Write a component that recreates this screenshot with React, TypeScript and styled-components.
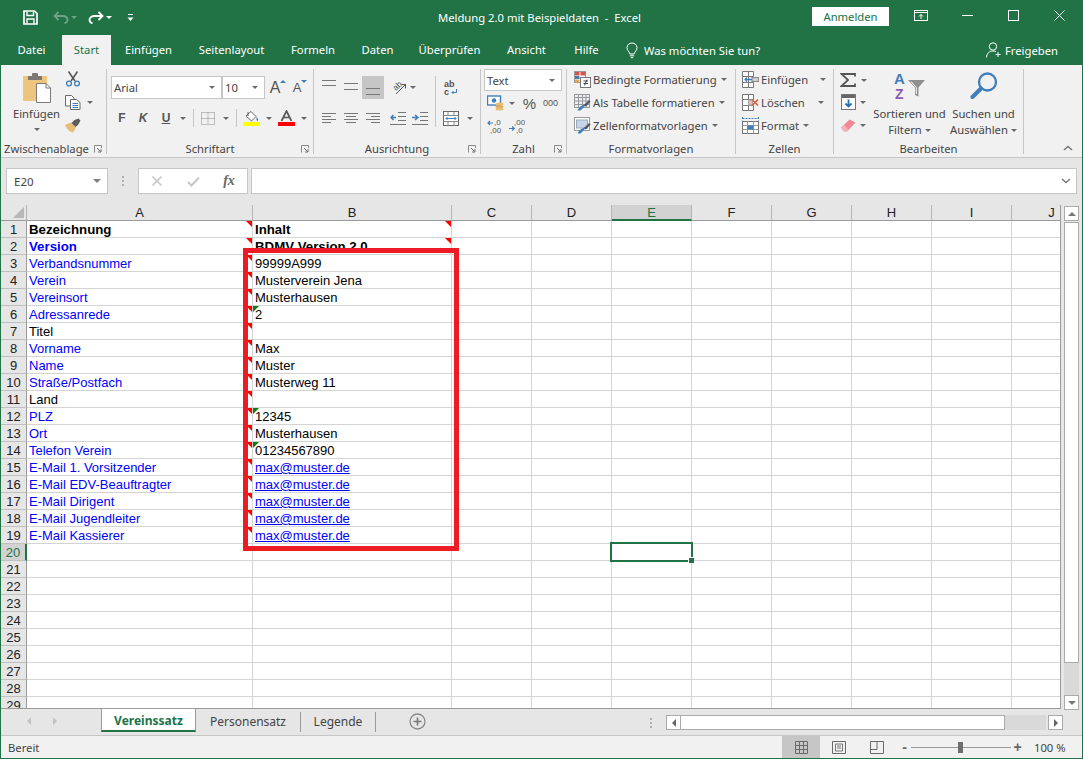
import React from 'react';
import styled, { createGlobalStyle } from 'styled-components';

const UI = `'Noto Sans', 'Open Sans', sans-serif`;
const CELL = `'Liberation Sans', Arial, sans-serif`;
const GREEN = '#217346';

const Global = createGlobalStyle`
  html, body { margin: 0; padding: 0; background: #fff; overflow: hidden; }
  * { box-sizing: border-box; }
`;

const Window = styled.div`
  width: 1083px;
  height: 759px;
  display: flex;
  flex-direction: column;
  border: 1px solid ${GREEN};
  border-top: none;
  font-family: ${UI};
  font-size: 11.25px;
  color: #444;
  overflow: hidden;
`;

/* title bar */
const TitleBar = styled.div`
  height: 35px;
  flex: none;
  display: flex;
  align-items: center;
  background: ${GREEN};
  color: #fff;
`;
const Qat = styled.div`
  width: 437px;
  display: flex;
  align-items: center;
  padding-left: 22px;
`;
const QatSlot = styled.span<{ $w: number }>`
  width: ${(p) => p.$w}px;
  display: flex;
  justify-content: center;
  align-items: center;
`;
const WhiteCaret = styled.span<{ $dim?: boolean }>`
  width: 0;
  height: 0;
  border-left: 3px solid transparent;
  border-right: 3px solid transparent;
  border-top: 3px solid ${(p) => (p.$dim ? '#6fa288' : '#fff')};
`;
const DocTitle = styled.div`
  white-space: pre;
`;
const SignIn = styled.div`
  margin-left: auto;
  margin-right: 9px;
  width: 77px;
  height: 19px;
  margin-top: -3px;
  background: #fff;
  color: ${GREEN};
  text-align: center;
  line-height: 19px;
`;
const WinButton = styled.div`
  width: 46px;
  height: 35px;
  display: flex;
  justify-content: center;
  align-items: center;
  padding-bottom: 4px;
`;

/* tabs */
const TabRow = styled.div`
  height: 30px;
  flex: none;
  display: flex;
  background: ${GREEN};
  color: #fff;
`;
const RibbonTab = styled.div<{ $w: number; $active?: boolean }>`
  width: ${(p) => p.$w}px;
  text-align: center;
  line-height: 30px;
  background: ${(p) => (p.$active ? '#f1f1f1' : 'transparent')};
  color: ${(p) => (p.$active ? GREEN : '#fff')};
`;
const TellMe = styled.div`
  margin-left: 13px;
  display: flex;
  align-items: center;
  gap: 6px;
`;
const Share = styled.div`
  margin-left: auto;
  padding-right: 24px;
  display: flex;
  align-items: center;
  gap: 3px;
`;

/* ribbon */
const Ribbon = styled.div`
  height: 93px;
  flex: none;
  display: flex;
  padding-top: 4px;
  background: #f1f1f1;
  border-bottom: 1px solid #c6c6c6;
`;
const Group = styled.div<{ $w: number }>`
  position: relative;
  width: ${(p) => p.$w}px;
  height: 85px;
  flex: none;
  display: flex;
  flex-direction: column;
  border-right: 1px solid #c6c6c6;
`;
const GroupBody = styled.div<{ $pl?: number; $pt?: number }>`
  flex: 1;
  display: flex;
  padding-left: ${(p) => p.$pl ?? 0}px;
  padding-top: ${(p) => p.$pt ?? 0}px;
`;
const GroupLabel = styled.div<{ $left?: boolean }>`
  height: 16px;
  margin-bottom: -3px;
  line-height: 16px;
  text-align: ${(p) => (p.$left ? 'left' : 'center')};
  padding-left: ${(p) => (p.$left ? 3 : 0)}px;
  color: #444;
`;
const LauncherMark = styled.svg`
  position: absolute;
  right: 4px;
  bottom: 1px;
`;
const Column = styled.div<{ $w?: number }>`
  display: flex;
  flex-direction: column;
  ${(p) => (p.$w ? `width: ${p.$w}px;` : '')}
`;
const ToolRow = styled.div<{ $h: number; $mt?: number }>`
  display: flex;
  align-items: center;
  height: ${(p) => p.$h}px;
  margin-top: ${(p) => p.$mt ?? 0}px;
`;
const Slot = styled.span<{ $w: number; $on?: boolean; $h?: number }>`
  width: ${(p) => p.$w}px;
  height: ${(p) => (p.$h ? `${p.$h}px` : '100%')};
  flex: none;
  display: flex;
  justify-content: center;
  align-items: center;
  background: ${(p) => (p.$on ? '#c6c6c6' : 'transparent')};
`;
const Caret = styled.span`
  display: inline-block;
  width: 0;
  height: 0;
  border-left: 3px solid transparent;
  border-right: 3px solid transparent;
  border-top: 3px solid #6a6a6a;
`;
const BigCaret = styled(Caret)`
  border-left-width: 4px;
  border-right-width: 4px;
  border-top-width: 4px;
  border-top-color: #808080;
`;
const VSep = styled.span<{ $h: number }>`
  width: 1px;
  height: ${(p) => p.$h}px;
  flex: none;
  background: #c6c6c6;
`;
const PasteButton = styled.div`
  width: 64px;
  display: flex;
  flex-direction: column;
  align-items: center;
  padding: 4px 0 0 7px;
  line-height: 16px;
`;
const PasteText = styled.div`
  margin-top: 3px;
  color: #444;
`;
const Combo = styled.div<{ $w: number; $h: number }>`
  width: ${(p) => p.$w}px;
  height: ${(p) => p.$h}px;
  flex: none;
  display: flex;
  align-items: center;
  justify-content: space-between;
  padding: 0 6px 0 2px;
  background: #fff;
  border: 1px solid #c6c6c6;
  color: #444;
`;
const Glyph = styled.span<{ $size: number; $bold?: boolean; $italic?: boolean; $under?: boolean; $color?: string }>`
  font-family: ${CELL};
  font-size: ${(p) => p.$size}px;
  line-height: 1;
  font-weight: ${(p) => (p.$bold ? 700 : 400)};
  font-style: ${(p) => (p.$italic ? 'italic' : 'normal')};
  text-decoration: ${(p) => (p.$under ? 'underline' : 'none')};
  color: ${(p) => p.$color ?? '#555'};
`;
const GrowFont = styled.span`
  position: relative;
  display: inline-block;
  padding-right: 3px;
`;
const GrowMark = styled.span<{ $down?: boolean }>`
  position: absolute;
  right: -3px;
  top: 0;
  width: 0;
  height: 0;
  border-left: 3px solid transparent;
  border-right: 3px solid transparent;
  ${(p) => (p.$down ? 'border-top: 3px solid #3f7eb8;' : 'border-bottom: 3px solid #3f7eb8;')}
`;
const StyleItem = styled.div`
  height: 23px;
  padding-bottom: 2px;
  display: flex;
  align-items: center;
  white-space: nowrap;
`;
const ItemIcon = styled.span`
  width: 19px;
  flex: none;
  display: flex;
`;
const ItemText = styled.span<{ $w?: number }>`
  margin-right: 4px;
  ${(p) => (p.$w ? `width: ${p.$w}px;` : '')}
`;
const BigTool = styled.div<{ $w: number }>`
  width: ${(p) => p.$w}px;
  flex: none;
  display: flex;
  flex-direction: column;
  align-items: center;
  line-height: 16px;
  white-space: nowrap;
`;
const BigIcon = styled.div<{ $pt: number }>`
  height: 37px;
  padding-top: ${(p) => p.$pt}px;
`;
const BigLine = styled.div`
  display: flex;
  align-items: center;
  gap: 3px;
`;
const RibbonEnd = styled.div`
  flex: 1;
  height: 85px;
  display: flex;
  align-items: flex-end;
  justify-content: flex-end;
  padding: 0 9px 3px 0;
`;

/* formula bar */
const FormulaBar = styled.div`
  height: 47px;
  flex: none;
  display: flex;
  align-items: flex-start;
  padding: 10px 5px 0 5px;
  background: #e6e6e6;
`;
const NameBox = styled.div`
  width: 102px;
  height: 26px;
  display: flex;
  align-items: center;
  justify-content: space-between;
  padding: 0 6px 0 7px;
  background: #fff;
  border: 1px solid #c6c6c6;
  font-size: 11.5px;
  color: #444;
`;
const Grip = styled.div`
  width: 30px;
  height: 26px;
  display: flex;
  flex-direction: column;
  align-items: center;
  justify-content: center;
  gap: 2px;
`;
const GripDot = styled.span`
  width: 2px;
  height: 2px;
  background: #b0b0b0;
`;
const FxBox = styled.div`
  width: 110px;
  height: 26px;
  display: flex;
  align-items: center;
  background: #fff;
  border: 1px solid #c6c6c6;
`;
const FxSlot = styled.span`
  flex: 1;
  display: flex;
  justify-content: center;
  align-items: center;
`;
const FxText = styled.span`
  font-family: 'Liberation Serif', serif;
  font-style: italic;
  font-size: 14px;
  font-weight: 700;
  color: #666;
`;
const FormulaInput = styled.div`
  margin-left: 3px;
  flex: 1;
  height: 26px;
  display: flex;
  align-items: center;
  justify-content: flex-end;
  padding-right: 5px;
  background: #fff;
  border: 1px solid #c6c6c6;
`;

/* sheet */
const SheetArea = styled.div`
  position: relative;
  height: 504px;
  flex: none;
  display: flex;
  background: #e6e6e6;
`;
const Grid = styled.div`
  width: 1060px;
  height: 504px;
  flex: none;
  display: grid;
  grid-template-columns: 26px 226px 199px repeat(7, 80px) 49px;
  grid-template-rows: 16px repeat(29, 17px);
  overflow: hidden;
  background: #fff;
  border-right: 1px solid #9b9b9b;
  border-bottom: 1px solid #9b9b9b;
  font-family: ${CELL};
  font-size: 13px;
`;
const Corner = styled.div`
  background: #e6e6e6;
  border-right: 1px solid #b5b5b5;
  border-bottom: 1px solid #9b9b9b;
  display: flex;
  align-items: flex-end;
  justify-content: flex-end;
  padding: 0 2px 2px 0;
`;
const ColHead = styled.div<{ $active?: boolean; $cut?: boolean }>`
  text-align: center;
  line-height: 15px;
  padding-left: ${(p) => (p.$cut ? 31 : 0)}px;
  background: ${(p) => (p.$active ? '#d2d2d2' : '#e6e6e6')};
  color: ${(p) => (p.$active ? GREEN : '#222')};
  border-right: 1px solid #b5b5b5;
  border-bottom: ${(p) => (p.$active ? `2px solid ${GREEN}` : '1px solid #9b9b9b')};
`;
const RowHead = styled.div<{ $active?: boolean }>`
  text-align: center;
  line-height: 18px;
  background: ${(p) => (p.$active ? '#d2d2d2' : '#e6e6e6')};
  color: ${(p) => (p.$active ? GREEN : '#222')};
  border-right: ${(p) => (p.$active ? `2px solid ${GREEN}` : '1px solid #9b9b9b')};
  border-bottom: 1px solid #c0c0c0;
`;
const Cell = styled.div<{ $bold?: boolean; $blue?: boolean }>`
  position: relative;
  padding-left: 2px;
  line-height: 18px;
  white-space: nowrap;
  border-right: 1px solid #d4d4d4;
  border-bottom: 1px solid #d4d4d4;
  font-size: ${(p) => (p.$bold ? 13.25 : 13)}px;
  font-weight: ${(p) => (p.$bold ? 700 : 400)};
  color: ${(p) => (p.$blue ? '#0000ff' : '#000')};
`;
const CellLink = styled.span`
  color: #0000ff;
  text-decoration: underline;
`;
const NoteMark = styled.span<{ $green?: boolean }>`
  position: absolute;
  top: 0;
  ${(p) => (p.$green ? 'left: 0;' : 'right: 0;')}
  width: 0;
  height: 0;
  border-top: 6px solid ${(p) => (p.$green ? '#107c10' : '#ff0000')};
  ${(p) => (p.$green ? 'border-right: 6px solid transparent;' : 'border-left: 6px solid transparent;')}
`;
const Selection = styled.div`
  position: absolute;
  top: -2px;
  left: -2px;
  width: 83px;
  height: 20px;
  border: 2px solid ${GREEN};
  z-index: 2;
`;
const SelectionHandle = styled.span`
  position: absolute;
  right: -3px;
  bottom: -3px;
  width: 6px;
  height: 6px;
  background: ${GREEN};
  border-left: 1px solid #fff;
  border-top: 1px solid #fff;
`;
const Highlight = styled.div`
  position: absolute;
  left: 242px;
  top: 43px;
  width: 216px;
  height: 303px;
  border: 5px solid #ed1c24;
  z-index: 3;
  pointer-events: none;
`;
const VScroll = styled.div`
  width: 21px;
  height: 504px;
  flex: none;
  display: flex;
  flex-direction: column;
  padding: 1px 3px 0 3px;
`;
const ScrollBtn = styled.div`
  width: 15px;
  height: 15px;
  flex: none;
  display: flex;
  align-items: center;
  justify-content: center;
  background: #fff;
  border: 1px solid #ababab;
`;
const VThumb = styled.div`
  height: 441px;
  margin-top: 1px;
  flex: none;
  background: #fff;
  border: 1px solid #ababab;
`;
const VTrack = styled.div`
  height: 32px;
  flex: none;
  background: #d9d9d9;
`;
const ArrowUp = styled.span<{ $down?: boolean }>`
  width: 0;
  height: 0;
  border-left: 4px solid transparent;
  border-right: 4px solid transparent;
  ${(p) => (p.$down ? 'border-top: 4px solid #777;' : 'border-bottom: 4px solid #777;')}
`;

/* sheet tabs */
const SheetBar = styled.div`
  height: 27px;
  flex: none;
  display: flex;
  background: #e6e6e6;
  border-bottom: 1px solid #c6c6c6;
`;
const SheetNav = styled.div`
  width: 100px;
  display: flex;
  align-items: center;
  padding: 0 0 3px 26px;
  gap: 22px;
`;
const NavArrow = styled.span<{ $right?: boolean; $dark?: boolean }>`
  width: 0;
  height: 0;
  border-top: 4px solid transparent;
  border-bottom: 4px solid transparent;
  ${(p) => `border-${p.$right ? 'left' : 'right'}: 4px solid ${p.$dark ? '#666' : '#c2c2c2'};`}
`;
const ActiveSheet = styled.div`
  width: 95px;
  height: 24px;
  text-align: center;
  line-height: 25px;
  font-weight: 700;
  font-size: 12px;
  background: #fff;
  color: ${GREEN};
  border-left: 1px solid #9b9b9b;
  border-right: 1px solid #9b9b9b;
  border-bottom: 2px solid ${GREEN};
  margin-top: -1px;
`;
const SheetTab = styled.div<{ $w: number }>`
  width: ${(p) => p.$w}px;
  height: 20px;
  margin-top: 3px;
  text-align: center;
  line-height: 20px;
  font-size: 12px;
  color: #444;
  border-right: 1px solid #9b9b9b;
`;
const AddSheet = styled.div`
  margin-left: 33px;
  height: 24px;
  display: flex;
  align-items: center;
`;
const HScrollWrap = styled.div`
  margin-left: auto;
  display: flex;
  align-items: flex-start;
  padding: 6px 19px 0 0;
`;
const HGrip = styled(Grip)`
  width: 5px;
  height: 15px;
  margin-right: 13px;
`;
const HThumb = styled.div`
  width: 324px;
  height: 15px;
  background: #fff;
  border: 1px solid #ababab;
  border-left: none;
`;
const HTrack = styled.div`
  width: 41px;
  height: 15px;
  margin-right: 2px;
  background: #d9d9d9;
`;

/* status bar */
const StatusBar = styled.div`
  flex: 1;
  display: flex;
  align-items: center;
  padding-left: 7px;
  background: #f1f1f1;
  color: #444;
`;
const ViewButton = styled.div<{ $on?: boolean }>`
  width: 38px;
  height: 100%;
  display: flex;
  align-items: center;
  justify-content: center;
  background: ${(p) => (p.$on ? '#c6c6c6' : 'transparent')};
`;
const Views = styled.div`
  margin-left: auto;
  height: 100%;
  display: flex;
`;
const ZoomBox = styled.div`
  display: flex;
  align-items: center;
  margin-left: 4px;
  padding-right: 18px;
`;
const ZoomTrack = styled.div`
  position: relative;
  width: 100px;
  height: 1px;
  margin: 0 2px;
  background: #9a9a9a;
`;
const ZoomKnob = styled.span`
  position: absolute;
  left: 47px;
  top: -5px;
  width: 5px;
  height: 11px;
  background: #6e6e6e;
`;
const ZoomSign = styled.span`
  width: 9px;
  text-align: center;
  font-family: ${CELL};
  font-size: 14px;
  font-weight: 700;
  line-height: 14px;
  color: #666;
`;
const ZoomValue = styled.span`
  width: 30px;
  margin-left: 12px;
  white-space: nowrap;
  color: #444;
`;

/* drawn icons */
type Ic = { w: number; h: number; children: React.ReactNode };
const Ico = ({ w, h, children }: Ic) => (
  <svg width={w} height={h} viewBox={`0 0 ${w} ${h}`} fill="none" style={{ display: 'block', flex: 'none' }}>
    {children}
  </svg>
);

const Launcher = () => (
  <LauncherMark width="8" height="8" viewBox="0 0 8 8" fill="none">
    <path d="M0.5 7.5V0.5H7.5V3" stroke="#8a8a8a" />
    <path d="M3 3L6.5 6.5M7 4V7H4" stroke="#6e6e6e" />
  </LauncherMark>
);

const SaveIcon = () => (
  <Ico w={15} h={15}>
    <path d="M1 1H11.5L14 3.5V14H1Z" stroke="#fff" strokeWidth="1.7" />
    <path d="M4 1.5V5.5H10.5V1.5M4 13.5V9H11V13.5" stroke="#fff" strokeWidth="1.4" />
  </Ico>
);
const UndoIcon = ({ color }: { color: string }) => (
  <Ico w={16} h={13}>
    <path d="M5.5 1L1.5 5L5.5 9" stroke={color} strokeWidth="1.8" />
    <path d="M2 5H9.5C12.5 5 14.5 6.6 14.5 9C14.5 10.5 13.3 11.8 11.5 12.3" stroke={color} strokeWidth="1.8" />
  </Ico>
);
const RedoIcon = () => (
  <Ico w={16} h={13}>
    <path d="M10.5 1L14.5 5L10.5 9" stroke="#fff" strokeWidth="1.8" />
    <path d="M14 5H6.5C3.5 5 1.5 6.6 1.5 9C1.5 10.5 2.7 11.8 4.5 12.3" stroke="#fff" strokeWidth="1.8" />
  </Ico>
);
const QatMenuIcon = () => (
  <Ico w={7} h={8}>
    <path d="M1 0.5H6" stroke="#fff" />
    <path d="M0.5 3.5H6.5L3.5 7Z" fill="#fff" />
  </Ico>
);
const DisplayIcon = () => (
  <Ico w={14} h={11}>
    <rect x="0.5" y="0.5" width="13" height="10" stroke="#fff" />
    <path d="M0.5 2.5H13.5" stroke="#fff" />
    <path d="M7 9V4.5M5 6.5L7 4.5L9 6.5" stroke="#fff" />
  </Ico>
);
const MinIcon = () => (
  <Ico w={11} h={11}>
    <path d="M0 5.5H11" stroke="#fff" />
  </Ico>
);
const MaxIcon = () => (
  <Ico w={11} h={11}>
    <rect x="0.5" y="0.5" width="10" height="10" stroke="#fff" />
  </Ico>
);
const CloseIcon = () => (
  <Ico w={11} h={11}>
    <path d="M0.5 0.5L10.5 10.5M10.5 0.5L0.5 10.5" stroke="#fff" />
  </Ico>
);
const BulbIcon = () => (
  <Ico w={12} h={17}>
    <path d="M3.8 12C3.5 9.5 1 8.8 1 5.7C1 3 3.2 1 6 1C8.8 1 11 3 11 5.7C11 8.8 8.5 9.5 8.2 12Z" stroke="#fff" />
    <path d="M4 13.8H8M4.8 15.7H7.2" stroke="#fff" />
  </Ico>
);
const PersonIcon = () => (
  <Ico w={16} h={16}>
    <circle cx="7" cy="4.5" r="3.7" stroke="#fff" />
    <path d="M0.5 15.5C0.8 11.5 3 9 7 9C8.3 9 9.3 9.3 10 9.7" stroke="#fff" />
    <path d="M12 10V15M9.5 12.5H14.5" stroke="#fff" />
  </Ico>
);

const PasteIcon = () => (
  <Ico w={28} h={30}>
    <rect x="0" y="3" width="24" height="25" rx="1" fill="#eec57d" />
    <rect x="5" y="3" width="14" height="4" fill="#7d7871" />
    <rect x="9" y="0" width="6" height="4" rx="1" fill="#7d7871" />
    <path d="M13.5 10.5H23L27.5 15V29.5H13.5Z" fill="#fff" stroke="#7a7a7a" />
    <path d="M23 10.5V15H27.5" stroke="#7a7a7a" />
  </Ico>
);
const CutIcon = () => (
  <Ico w={16} h={16}>
    <path d="M3.5 0.5L10 10M12.5 0.5L6 10" stroke="#555" strokeWidth="1.5" />
    <circle cx="4" cy="12.5" r="2.4" stroke="#3f7eb8" strokeWidth="1.3" />
    <circle cx="12" cy="12.5" r="2.4" stroke="#3f7eb8" strokeWidth="1.3" />
  </Ico>
);
const CopyIcon = () => (
  <Ico w={16} h={15}>
    <path d="M0.5 0.5H6.5L9 3V11H0.5Z" fill="#fff" stroke="#6a6a6a" />
    <path d="M5.5 4.5H11.5L15 7.5V14.5H5.5Z" fill="#fff" stroke="#6a6a6a" />
    <path d="M7.5 8.5H13M7.5 10.5H13M7.5 12.5H13" stroke="#3f7eb8" />
  </Ico>
);
const BrushIcon = () => (
  <Ico w={17} h={15}>
    <path d="M0 7L6 4.5L11 9.5L8 14.5C5 14 1.5 11 0 7Z" fill="#e9bd75" />
    <path d="M6.5 5L9.5 2L13.5 0.5L15.5 2.5L13 7L10.5 9Z" fill="#5e5e5e" />
  </Ico>
);
const BordersIcon = () => (
  <Ico w={14} h={13}>
    <path d="M0.5 0.5H13.5V12.5H0.5ZM7 0.5V12.5M0.5 6.5H13.5" stroke="#8a8a8a" strokeDasharray="1 1" />
  </Ico>
);
const FillIcon = () => (
  <Ico w={17} h={16}>
    <path d="M3 6L8 1.5L13 6.5L8.5 11Z" fill="#fff" stroke="#666" />
    <path d="M5 2V6" stroke="#666" />
    <path d="M13.5 7C15 8.5 15.5 9.5 15 10.5C14.5 11 13.5 10.8 13.5 9.5Z" fill="#3f7eb8" />
    <rect x="0" y="12" width="17" height="4" fill="#ffff00" />
  </Ico>
);
const FontColorIcon = () => (
  <Ico w={17} h={16}>
    <path d="M3.5 11L8.5 1L13.5 11M5.5 7.5H11.5" stroke="#5a5a5a" strokeWidth="1.7" />
    <rect x="0" y="12" width="17" height="4" fill="#ff0000" />
  </Ico>
);
const Lines = ({ rows, w = 14, h = 15, color = '#777' }: { rows: [number, number, number][]; w?: number; h?: number; color?: string }) => (
  <Ico w={w} h={h}>
    {rows.map(([a, b, y], i) => (
      <path key={i} d={`M${a} ${y + 0.5}H${b}`} stroke={color} />
    ))}
  </Ico>
);
const OrientIcon = () => (
  <Ico w={22} h={22}>
    <text x="5" y="13" transform="rotate(-45 8 10)" fontFamily={CELL} fontSize="8.5" fill="#555">ab</text>
    <path d="M8 17L17.5 7.5M17.5 7.5H13.5M17.5 7.5V11.5" stroke="#555" />
  </Ico>
);
const WrapIcon = () => (
  <Ico w={14} h={16}>
    <text x="0" y="7" fontFamily={CELL} fontSize="9" fontWeight="700" fill="#555">ab</text>
    <text x="0" y="15" fontFamily={CELL} fontSize="9" fontWeight="700" fill="#555">c</text>
    <path d="M12.5 9V12.5H8M9.5 11L8 12.5L9.5 14" stroke="#3f7eb8" />
  </Ico>
);
const IndentIcon = ({ flip }: { flip?: boolean }) => (
  <Ico w={16} h={13}>
    <path d="M8 0.5H16M8 4.5H16M8 8.5H16M0 12.5H16" stroke="#777" />
    {flip ? (
      <path d="M0 5.5H5M3 3L6 5.5L3 8" stroke="#3f7eb8" strokeWidth="1.5" />
    ) : (
      <path d="M6 5.5H1M3.5 3L1 5.5L3.5 8" stroke="#3f7eb8" strokeWidth="1.5" />
    )}
  </Ico>
);
const MergeIcon = () => (
  <Ico w={16} h={15}>
    <rect x="0.5" y="0.5" width="15" height="14" fill="#fff" stroke="#666" />
    <path d="M0.5 4.5H15.5M0.5 10.5H15.5M5 0.5V4.5M11 0.5V4.5M5 10.5V14.5M11 10.5V14.5" stroke="#888" />
    <path d="M3 7.5H13M4.5 6L3 7.5L4.5 9M11.5 6L13 7.5L11.5 9" stroke="#3f7eb8" />
  </Ico>
);
const CurrencyIcon = () => (
  <Ico w={17} h={16}>
    <rect x="0.5" y="1" width="13" height="9" fill="#fff" stroke="#3f7eb8" strokeWidth="1.4" />
    <circle cx="7" cy="5.5" r="2.2" fill="#3f7eb8" />
    <ellipse cx="12.5" cy="9" rx="4" ry="1.6" fill="#e9bd75" />
    <ellipse cx="12.5" cy="11.5" rx="4" ry="1.6" fill="#e0ab55" />
    <ellipse cx="12.5" cy="14" rx="4" ry="1.6" fill="#e9bd75" />
  </Ico>
);
const DecimalIcon = ({ more }: { more?: boolean }) => (
  <Ico w={16} h={15}>
    <text x={more ? 5 : 7} y="6" fontFamily={CELL} fontSize="8" fill="#555">{more ? ',00' : ',0'}</text>
    <text x={more ? 7 : 3} y="14" fontFamily={CELL} fontSize="8" fill="#555">{more ? ',0' : ',00'}</text>
    {more ? (
      <path d="M0 9.5H5M3.2 7.5L5.2 9.5L3.2 11.5" stroke="#3f7eb8" strokeWidth="1.2" />
    ) : (
      <path d="M6 4H1M3 2L1 4L3 6" stroke="#3f7eb8" strokeWidth="1.2" />
    )}
  </Ico>
);
const TableBrush = () => (
  <>
    <path d="M13 9.5L9 14L6.5 16.5H3.5C4.5 15.5 4.5 13.5 6.5 12.5L8 11.5Z" fill="#3f7eb8" />
    <path d="M10 11L15 6L16.5 7.5L12 12.5Z" fill="#555" />
  </>
);
const ConditionalIcon = () => (
  <Ico w={17} h={17}>
    <rect x="0.5" y="0.5" width="11" height="11" fill="#fff" stroke="#999" />
    <rect x="1" y="1" width="4.5" height="3.5" fill="#d9534a" />
    <rect x="6.5" y="1" width="5" height="3.5" fill="#d9534a" />
    <rect x="1" y="5" width="4.5" height="3" fill="#3f7eb8" />
    <rect x="1" y="8.5" width="4.5" height="3" fill="#e9a54b" />
    <rect x="6.5" y="6.5" width="10" height="10" fill="#fff" stroke="#777" />
    <path d="M9.5 10H14M9.5 12.5H14M13 8.5L10.5 14.5" stroke="#444" />
  </Ico>
);
const TableStyleIcon = () => (
  <Ico w={17} h={17}>
    <rect x="0.5" y="0.5" width="15" height="13" fill="#e9eef5" stroke="#999" />
    <path d="M0.5 3.5H15.5M0.5 7H15.5M0.5 10.5H15.5M4.5 0.5V13.5M8.5 0.5V13.5M12 0.5V13.5" stroke="#999" />
    <TableBrush />
  </Ico>
);
const CellStyleIcon = () => (
  <Ico w={17} h={17}>
    <rect x="0.5" y="0.5" width="15" height="13" fill="#fff" stroke="#999" />
    <rect x="2.5" y="3" width="11" height="8" fill="#c5d4e8" stroke="#9aa9bb" />
    <TableBrush />
  </Ico>
);
const CellsGrid = ({ mark }: { mark: 'in' | 'del' }) => (
  <Ico w={17} h={17}>
    <path d="M0.5 0.5H6.5V5.5H0.5ZM6.5 0.5H11.5V5.5H6.5ZM0.5 11.5H6.5V16.5H0.5ZM6.5 11.5H11.5V16.5H6.5Z" stroke="#777" fill="#fff" />
    <path d="M0.5 5.5H6.5V11.5H0.5Z" stroke="#777" fill="#fff" />
    {mark === 'in' ? (
      <>
        <rect x="10" y="6.5" width="6.5" height="4" fill="#cfcfcf" stroke="#8a8a8a" />
        <path d="M10 8.5H3M5 6.5L3 8.5L5 10.5" stroke="#3f7eb8" strokeWidth="1.3" />
      </>
    ) : (
      <>
        <rect x="6.5" y="6" width="4" height="5" fill="#f2b8a8" stroke="#aaa" />
        <path d="M10 5.5L16 11.5M16 5.5L10 11.5" stroke="#d9603f" strokeWidth="1.6" />
      </>
    )}
  </Ico>
);
const FormatCellIcon = () => (
  <Ico w={17} h={17}>
    <path d="M0.5 0V3.5M16.5 0V3.5M0.5 1.5H16.5" stroke="#3f7eb8" strokeDasharray="2 1" />
    <rect x="0.5" y="4.5" width="16" height="12" fill="#fff" stroke="#777" />
    <path d="M0.5 8.5H16.5M0.5 12.5H16.5M5.5 4.5V16.5M11.5 4.5V16.5" stroke="#999" />
    <rect x="5.5" y="8.5" width="6" height="4" fill="#3f7eb8" />
  </Ico>
);
const SigmaIcon = () => (
  <Ico w={16} h={14}>
    <path d="M15 3.5V1H1.5L8 7L1.5 13H15V10.5" stroke="#555" strokeWidth="1.8" />
  </Ico>
);
const FillDownIcon = () => (
  <Ico w={15} h={16}>
    <rect x="0.5" y="0.5" width="14" height="15" fill="#fff" stroke="#777" />
    <rect x="1" y="1" width="13" height="3" fill="#666" />
    <path d="M7.5 5.5V12M4.5 9.5L7.5 12.5L10.5 9.5" stroke="#2b6fb3" strokeWidth="1.8" />
  </Ico>
);
const EraserIcon = () => (
  <Ico w={15} h={13}>
    <path d="M0 8.5L8.5 0.5L14.5 3.5L6 12.5H3Z" fill="#ef8a96" />
    <path d="M0 8.5L3 12.5H6L7.5 11L3 6Z" fill="#f4b3bb" />
  </Ico>
);
const SortIcon = () => (
  <Ico w={31} h={34}>
    <text x="0" y="15" fontFamily={CELL} fontSize="15" fontWeight="700" fill="#3f7eb8">A</text>
    <text x="1" y="30" fontFamily={CELL} fontSize="14" fontWeight="700" fill="#8a5bb0">Z</text>
    <path d="M14 11H31L24.5 18.5V27.5L21 26V18.5Z" fill="#8f8f8f" />
    <path d="M17 12.5L22.3 18.5V25" stroke="#fff" />
  </Ico>
);
const SearchIcon = () => (
  <Ico w={28} h={27}>
    <circle cx="17.5" cy="10" r="8.5" stroke="#3f7eb8" strokeWidth="2.3" />
    <path d="M11 16.5L2.5 25" stroke="#3f7eb8" strokeWidth="4" strokeLinecap="round" />
  </Ico>
);
const ChevronUp = () => (
  <Ico w={10} h={6}>
    <path d="M1 5L5 1.5L9 5" stroke="#777" strokeWidth="1.5" />
  </Ico>
);
const CrossIcon = () => (
  <Ico w={12} h={12}>
    <path d="M1.5 1.5L10.5 10.5M10.5 1.5L1.5 10.5" stroke="#c6c6c6" strokeWidth="1.6" />
  </Ico>
);
const CheckIcon = () => (
  <Ico w={13} h={11}>
    <path d="M1 6L4.5 9.5L12 1.5" stroke="#c6c6c6" strokeWidth="2" />
  </Ico>
);
const ChevronDown = () => (
  <Ico w={10} h={6}>
    <path d="M1 1L5 4.5L9 1" stroke="#777" strokeWidth="1.4" />
  </Ico>
);
const CornerMark = () => (
  <Ico w={11} h={11}>
    <path d="M11 0V11H0Z" fill="#b8b8b8" />
  </Ico>
);
const PlusCircle = () => (
  <Ico w={17} h={17}>
    <circle cx="8.5" cy="8.5" r="7.5" stroke="#8a8a8a" strokeWidth="1.3" />
    <path d="M8.5 4.5V12.5M4.5 8.5H12.5" stroke="#777" strokeWidth="1.6" />
  </Ico>
);
const NormalView = () => (
  <Ico w={13} h={13}>
    <path d="M0.5 0.5H12.5V12.5H0.5ZM4.5 0.5V12.5M8.5 0.5V12.5M0.5 4.5H12.5M0.5 8.5H12.5" stroke="#6a6a6a" />
  </Ico>
);
const LayoutView = () => (
  <Ico w={14} h={13}>
    <path d="M0.5 0.5H13.5V12.5H0.5Z" stroke="#6a6a6a" />
    <path d="M3.5 3H10.5V10H3.5ZM5 5H9M5 7H9" stroke="#777" />
  </Ico>
);
const BreakView = () => (
  <Ico w={14} h={13}>
    <path d="M0.5 0.5H13.5V12.5H0.5ZM0.5 8.5H7V0.5" stroke="#6a6a6a" />
  </Ico>
);

/* data */
type RowData = { a: string; b?: string; blue?: boolean; bold?: boolean; green?: boolean; link?: boolean };
const ROWS: RowData[] = [
  { a: 'Bezeichnung', b: 'Inhalt', bold: true },
  { a: 'Version', b: 'BDMV Version 2.0', bold: true, blue: true },
  { a: 'Verbandsnummer', b: '99999A999', blue: true },
  { a: 'Verein', b: 'Musterverein Jena', blue: true },
  { a: 'Vereinsort', b: 'Musterhausen', blue: true },
  { a: 'Adressanrede', b: '2', blue: true, green: true },
  { a: 'Titel' },
  { a: 'Vorname', b: 'Max', blue: true },
  { a: 'Name', b: 'Muster', blue: true },
  { a: 'Straße/Postfach', b: 'Musterweg 11', blue: true },
  { a: 'Land' },
  { a: 'PLZ', b: '12345', blue: true, green: true },
  { a: 'Ort', b: 'Musterhausen', blue: true },
  { a: 'Telefon Verein', b: '01234567890', blue: true, green: true },
  { a: 'E-Mail 1. Vorsitzender', b: 'max@muster.de', blue: true, link: true },
  { a: 'E-Mail EDV-Beauftragter', b: 'max@muster.de', blue: true, link: true },
  { a: 'E-Mail Dirigent', b: 'max@muster.de', blue: true, link: true },
  { a: 'E-Mail Jugendleiter', b: 'max@muster.de', blue: true, link: true },
  { a: 'E-Mail Kassierer', b: 'max@muster.de', blue: true, link: true },
];
const COLUMNS = ['A', 'B', 'C', 'D', 'E', 'F', 'G', 'H', 'I', 'J'];
const TABS: [string, number][] = [
  ['Datei', 61],
  ['Start', 49],
  ['Einfügen', 75],
  ['Seitenlayout', 91],
  ['Formeln', 72],
  ['Daten', 57],
  ['Überprüfen', 87],
  ['Ansicht', 67],
  ['Hilfe', 53],
];

function SheetRows() {
  const out: React.ReactNode[] = [];
  for (let n = 1; n <= 29; n++) {
    const row = ROWS[n - 1];
    const active = n === 20;
    out.push(
      <RowHead key={`h${n}`} $active={active}>
        {n}
      </RowHead>,
    );
    COLUMNS.forEach((col) => {
      const key = `${col}${n}`;
      if (col === 'A' && row) {
        out.push(
          <Cell key={key} $bold={row.bold} $blue={row.blue}>
            {row.a}
            <NoteMark />
          </Cell>,
        );
      } else if (col === 'B' && row) {
        out.push(
          <Cell key={key} $bold={row.bold}>
            {row.link ? <CellLink>{row.b}</CellLink> : row.b}
            {row.bold && <NoteMark />}
            {row.green && <NoteMark $green />}
          </Cell>,
        );
      } else {
        out.push(
          <Cell key={key}>
            {active && col === 'E' && (
              <Selection>
                <SelectionHandle />
              </Selection>
            )}
          </Cell>,
        );
      }
    });
  }
  return <>{out}</>;
}

export default function App() {
  return (
    <Window>
      <Global />
      <TitleBar>
        <Qat>
          <QatSlot $w={15}><SaveIcon /></QatSlot>
          <QatSlot $w={15} />
          <QatSlot $w={16}><UndoIcon color="#6fa288" /></QatSlot>
          <QatSlot $w={9}><WhiteCaret $dim /></QatSlot>
          <QatSlot $w={10} />
          <QatSlot $w={16}><RedoIcon /></QatSlot>
          <QatSlot $w={9}><WhiteCaret /></QatSlot>
          <QatSlot $w={14} />
          <QatSlot $w={7}><QatMenuIcon /></QatSlot>
        </Qat>
        <DocTitle>{'Meldung 2.0 mit Beispieldaten  -  Excel'}</DocTitle>
        <SignIn>Anmelden</SignIn>
        <WinButton><DisplayIcon /></WinButton>
        <WinButton><MinIcon /></WinButton>
        <WinButton><MaxIcon /></WinButton>
        <WinButton><CloseIcon /></WinButton>
      </TitleBar>

      <TabRow>
        {TABS.map(([label, w]) => (
          <RibbonTab key={label} $w={w} $active={label === 'Start'}>
            {label}
          </RibbonTab>
        ))}
        <TellMe>
          <BulbIcon />
          Was möchten Sie tun?
        </TellMe>
        <Share>
          <PersonIcon />
          Freigeben
        </Share>
      </TabRow>

      <Ribbon>
        <Group $w={106}>
          <GroupBody>
            <PasteButton>
              <PasteIcon />
              <PasteText>Einfügen</PasteText>
              <Slot $w={10} $h={14}><Caret /></Slot>
            </PasteButton>
            <Column>
              <ToolRow $h={16} $mt={2}>
                <Slot $w={16}><CutIcon /></Slot>
              </ToolRow>
              <ToolRow $h={16} $mt={7}>
                <Slot $w={16}><CopyIcon /></Slot>
                <Slot $w={17}><Caret /></Slot>
              </ToolRow>
              <ToolRow $h={16} $mt={7}>
                <Slot $w={17}><BrushIcon /></Slot>
              </ToolRow>
            </Column>
          </GroupBody>
          <GroupLabel $left>Zwischenablage</GroupLabel>
          <Launcher />
        </Group>

        <Group $w={207}>
          <GroupBody $pl={4} $pt={7}>
            <Column>
              <ToolRow $h={23}>
                <Combo $w={111} $h={23}>Arial<Caret /></Combo>
                <Combo $w={43} $h={23}>10<Caret /></Combo>
                <Slot $w={23}>
                  <GrowFont>
                    <Glyph $size={16}>A</Glyph>
                    <GrowMark />
                  </GrowFont>
                </Slot>
                <Slot $w={21}>
                  <GrowFont>
                    <Glyph $size={13}>A</Glyph>
                    <GrowMark $down />
                  </GrowFont>
                </Slot>
              </ToolRow>
              <ToolRow $h={18} $mt={10}>
                <Slot $w={22}><Glyph $size={12} $bold>F</Glyph></Slot>
                <Slot $w={20}><Glyph $size={12} $bold $italic>K</Glyph></Slot>
                <Slot $w={26}><Glyph $size={12} $bold $under>U</Glyph></Slot>
                <Slot $w={7}><Caret /></Slot>
                <Slot $w={7} />
                <VSep $h={18} />
                <Slot $w={28}><BordersIcon /></Slot>
                <Slot $w={7}><Caret /></Slot>
                <Slot $w={7} />
                <VSep $h={18} />
                <Slot $w={28}><FillIcon /></Slot>
                <Slot $w={7}><Caret /></Slot>
                <Slot $w={28}><FontColorIcon /></Slot>
                <Slot $w={7}><Caret /></Slot>
              </ToolRow>
            </Column>
          </GroupBody>
          <GroupLabel>Schriftart</GroupLabel>
          <Launcher />
        </Group>

        <Group $w={167}>
          <GroupBody $pl={4} $pt={7}>
            <Column $w={117}>
              <ToolRow $h={23}>
                <Slot $w={22}><Lines rows={[[0, 14, 0], [0, 14, 5]]} /></Slot>
                <Slot $w={22}><Lines rows={[[0, 14, 3], [0, 14, 9]]} /></Slot>
                <Slot $w={22} $on><Lines rows={[[0, 14, 8], [0, 14, 14]]} /></Slot>
                <Slot $w={4} />
                <Slot $w={21}><OrientIcon /></Slot>
                <Slot $w={7}><Caret /></Slot>
              </ToolRow>
              <ToolRow $h={18} $mt={10}>
                <Slot $w={22}><Lines h={12} rows={[[0, 14, 1], [0, 9, 4], [0, 14, 7], [0, 9, 10]]} /></Slot>
                <Slot $w={22}><Lines h={12} rows={[[0, 14, 1], [2, 12, 4], [0, 14, 7], [2, 12, 10]]} /></Slot>
                <Slot $w={22}><Lines h={12} rows={[[0, 14, 1], [5, 14, 4], [0, 14, 7], [5, 14, 10]]} /></Slot>
                <Slot $w={3} />
                <Slot $w={22}><IndentIcon /></Slot>
                <Slot $w={22}><IndentIcon flip /></Slot>
              </ToolRow>
            </Column>
            <VSep $h={51} />
            <Column>
              <ToolRow $h={23}>
                <Slot $w={30}><WrapIcon /></Slot>
              </ToolRow>
              <ToolRow $h={18} $mt={10}>
                <Slot $w={30}><MergeIcon /></Slot>
                <Slot $w={7}><Caret /></Slot>
              </ToolRow>
            </Column>
          </GroupBody>
          <GroupLabel>Ausrichtung</GroupLabel>
          <Launcher />
        </Group>

        <Group $w={86}>
          <GroupBody $pl={3}>
            <Column>
              <Combo $w={78} $h={22}>Text<Caret /></Combo>
              <ToolRow $h={18} $mt={3}>
                <Slot $w={22}><CurrencyIcon /></Slot>
                <Slot $w={11}><Caret /></Slot>
                <Slot $w={25}><Glyph $size={15}>%</Glyph></Slot>
                <Slot $w={17}><Glyph $size={9}>000</Glyph></Slot>
              </ToolRow>
              <ToolRow $h={18} $mt={5}>
                <Slot $w={22}><DecimalIcon /></Slot>
                <Slot $w={22}><DecimalIcon more /></Slot>
              </ToolRow>
            </Column>
          </GroupBody>
          <GroupLabel>Zahl</GroupLabel>
          <Launcher />
        </Group>

        <Group $w={169}>
          <GroupBody $pl={7}>
            <Column>
              <StyleItem><ItemIcon><ConditionalIcon /></ItemIcon><ItemText>Bedingte Formatierung</ItemText><Caret /></StyleItem>
              <StyleItem><ItemIcon><TableStyleIcon /></ItemIcon><ItemText>Als Tabelle formatieren</ItemText><Caret /></StyleItem>
              <StyleItem><ItemIcon><CellStyleIcon /></ItemIcon><ItemText>Zellenformatvorlagen</ItemText><Caret /></StyleItem>
            </Column>
          </GroupBody>
          <GroupLabel>Formatvorlagen</GroupLabel>
        </Group>

        <Group $w={98}>
          <GroupBody $pl={6}>
            <Column>
              <StyleItem><ItemIcon><CellsGrid mark="in" /></ItemIcon><ItemText $w={55}>Einfügen</ItemText><Caret /></StyleItem>
              <StyleItem><ItemIcon><CellsGrid mark="del" /></ItemIcon><ItemText $w={53}>Löschen</ItemText><Caret /></StyleItem>
              <StyleItem><ItemIcon><FormatCellIcon /></ItemIcon><ItemText>Format</ItemText><Caret /></StyleItem>
            </Column>
          </GroupBody>
          <GroupLabel>Zellen</GroupLabel>
        </Group>

        <Group $w={190}>
          <GroupBody $pl={6}>
            <Column $w={30}>
              <ToolRow $h={16} $mt={3}>
                <Slot $w={16}><SigmaIcon /></Slot>
                <Slot $w={16}><Caret /></Slot>
              </ToolRow>
              <ToolRow $h={16} $mt={6}>
                <Slot $w={16}><FillDownIcon /></Slot>
                <Slot $w={14}><Caret /></Slot>
              </ToolRow>
              <ToolRow $h={14} $mt={8}>
                <Slot $w={16}><EraserIcon /></Slot>
                <Slot $w={14}><Caret /></Slot>
              </ToolRow>
            </Column>
            <BigTool $w={79}>
              <BigIcon $pt={0}><SortIcon /></BigIcon>
              <div>Sortieren und</div>
              <BigLine>Filtern <Caret /></BigLine>
            </BigTool>
            <BigTool $w={69}>
              <BigIcon $pt={3}><SearchIcon /></BigIcon>
              <div>Suchen und</div>
              <BigLine>Auswählen <Caret /></BigLine>
            </BigTool>
          </GroupBody>
          <GroupLabel>Bearbeiten</GroupLabel>
        </Group>

        <RibbonEnd><ChevronUp /></RibbonEnd>
      </Ribbon>

      <FormulaBar>
        <NameBox>E20<BigCaret /></NameBox>
        <Grip><GripDot /><GripDot /><GripDot /></Grip>
        <FxBox>
          <FxSlot><CrossIcon /></FxSlot>
          <FxSlot><CheckIcon /></FxSlot>
          <FxSlot><FxText>fx</FxText></FxSlot>
        </FxBox>
        <FormulaInput><ChevronDown /></FormulaInput>
      </FormulaBar>

      <SheetArea>
        <Grid>
          <Corner><CornerMark /></Corner>
          {COLUMNS.map((c) => (
            <ColHead key={c} $active={c === 'E'} $cut={c === 'J'}>{c}</ColHead>
          ))}
          <SheetRows />
        </Grid>
        <VScroll>
          <ScrollBtn><ArrowUp /></ScrollBtn>
          <VThumb />
          <VTrack />
          <ScrollBtn><ArrowUp $down /></ScrollBtn>
        </VScroll>
        <Highlight />
      </SheetArea>

      <SheetBar>
        <SheetNav>
          <NavArrow />
          <NavArrow $right />
        </SheetNav>
        <ActiveSheet>Vereinssatz</ActiveSheet>
        <SheetTab $w={105}>Personensatz</SheetTab>
        <SheetTab $w={75}>Legende</SheetTab>
        <AddSheet><PlusCircle /></AddSheet>
        <HScrollWrap>
          <HGrip><GripDot /><GripDot /><GripDot /></HGrip>
          <ScrollBtn><NavArrow $dark /></ScrollBtn>
          <HThumb />
          <HTrack />
          <ScrollBtn><NavArrow $right $dark /></ScrollBtn>
        </HScrollWrap>
      </SheetBar>

      <StatusBar>
        Bereit
        <Views>
          <ViewButton $on><NormalView /></ViewButton>
          <ViewButton><LayoutView /></ViewButton>
          <ViewButton><BreakView /></ViewButton>
        </Views>
        <ZoomBox>
          <ZoomSign>-</ZoomSign>
          <ZoomTrack><ZoomKnob /></ZoomTrack>
          <ZoomSign>+</ZoomSign>
          <ZoomValue>100 %</ZoomValue>
        </ZoomBox>
      </StatusBar>
    </Window>
  );
}
